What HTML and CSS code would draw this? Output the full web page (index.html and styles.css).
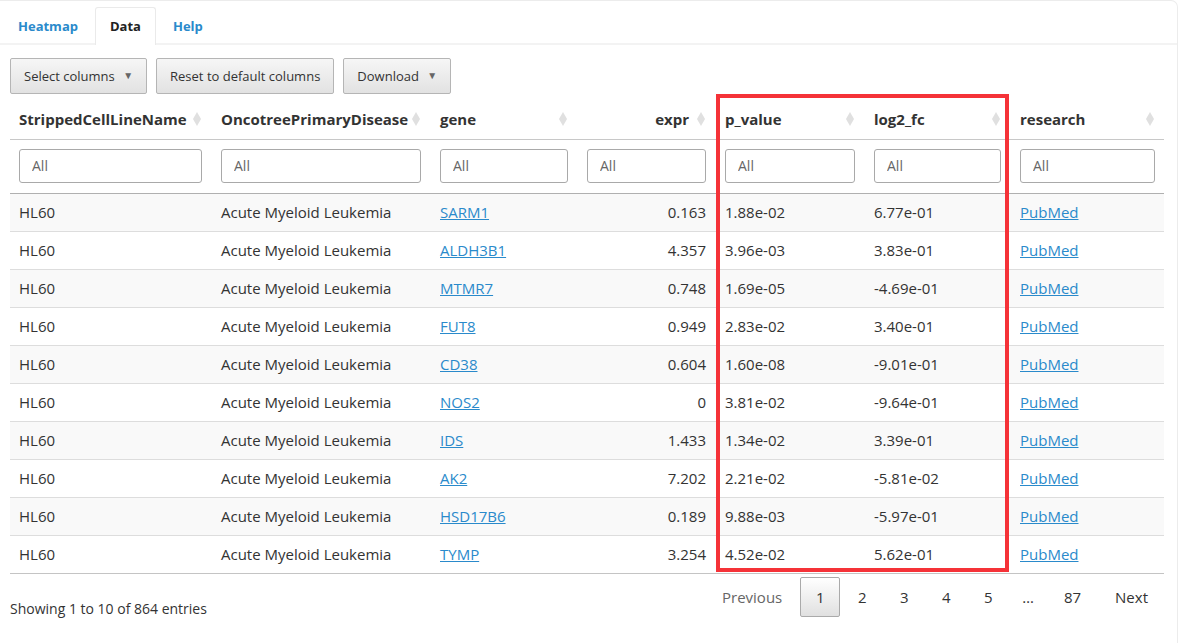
FILE: index.html
```html
<!DOCTYPE html>
<html>
<head>
<meta charset="utf-8">
<link rel="stylesheet" href="styles.css">
</head>
<body>
<div class="card">
  <ul class="tabs">
    <li class="tab"><a>Heatmap</a></li>
    <li class="tab active"><a>Data</a></li>
    <li class="tab"><a>Help</a></li>
  </ul>
  <div class="content">
    <div class="toolbar">
      <button class="btn">Select columns <span class="caret">▼</span></button>
      <button class="btn">Reset to default columns</button>
      <button class="btn">Download <span class="caret">▼</span></button>
    </div>
    <div class="table-wrap">
      <table class="grid">
        <colgroup>
          <col style="width:201px"><col style="width:219px"><col style="width:147px"><col style="width:138px"><col style="width:149px"><col style="width:146px"><col style="width:154px">
        </colgroup>
        <thead>
          <tr class="head">
            <th><div class="hcell"><span>StrippedCellLineName</span><svg class="sort" viewBox="0 0 8 16"><path d="M4 1 L8 8 L4 15 L0 8 Z"/></svg></div></th>
            <th><div class="hcell"><span>OncotreePrimaryDisease</span><svg class="sort" viewBox="0 0 8 16"><path d="M4 1 L8 8 L4 15 L0 8 Z"/></svg></div></th>
            <th><div class="hcell"><span>gene</span><svg class="sort" viewBox="0 0 8 16"><path d="M4 1 L8 8 L4 15 L0 8 Z"/></svg></div></th>
            <th><div class="hcell right"><span>expr</span><svg class="sort" viewBox="0 0 8 16"><path d="M4 1 L8 8 L4 15 L0 8 Z"/></svg></div></th>
            <th><div class="hcell"><span>p_value</span><svg class="sort" viewBox="0 0 8 16"><path d="M4 1 L8 8 L4 15 L0 8 Z"/></svg></div></th>
            <th><div class="hcell"><span>log2_fc</span><svg class="sort" viewBox="0 0 8 16"><path d="M4 1 L8 8 L4 15 L0 8 Z"/></svg></div></th>
            <th><div class="hcell"><span>research</span><svg class="sort" viewBox="0 0 8 16"><path d="M4 1 L8 8 L4 15 L0 8 Z"/></svg></div></th>
          </tr>
          <tr class="filters">
            <td><input class="filter" placeholder="All"></td>
            <td><input class="filter" placeholder="All"></td>
            <td><input class="filter" placeholder="All"></td>
            <td><input class="filter" placeholder="All"></td>
            <td><input class="filter" placeholder="All"></td>
            <td><input class="filter" placeholder="All"></td>
            <td><input class="filter" placeholder="All"></td>
          </tr>
        </thead>
        <tbody>
          <tr><td>HL60</td><td>Acute Myeloid Leukemia</td><td><a class="link">SARM1</a></td><td class="num">0.163</td><td>1.88e-02</td><td>6.77e-01</td><td><a class="link">PubMed</a></td></tr>
          <tr><td>HL60</td><td>Acute Myeloid Leukemia</td><td><a class="link">ALDH3B1</a></td><td class="num">4.357</td><td>3.96e-03</td><td>3.83e-01</td><td><a class="link">PubMed</a></td></tr>
          <tr><td>HL60</td><td>Acute Myeloid Leukemia</td><td><a class="link">MTMR7</a></td><td class="num">0.748</td><td>1.69e-05</td><td>-4.69e-01</td><td><a class="link">PubMed</a></td></tr>
          <tr><td>HL60</td><td>Acute Myeloid Leukemia</td><td><a class="link">FUT8</a></td><td class="num">0.949</td><td>2.83e-02</td><td>3.40e-01</td><td><a class="link">PubMed</a></td></tr>
          <tr><td>HL60</td><td>Acute Myeloid Leukemia</td><td><a class="link">CD38</a></td><td class="num">0.604</td><td>1.60e-08</td><td>-9.01e-01</td><td><a class="link">PubMed</a></td></tr>
          <tr><td>HL60</td><td>Acute Myeloid Leukemia</td><td><a class="link">NOS2</a></td><td class="num">0</td><td>3.81e-02</td><td>-9.64e-01</td><td><a class="link">PubMed</a></td></tr>
          <tr><td>HL60</td><td>Acute Myeloid Leukemia</td><td><a class="link">IDS</a></td><td class="num">1.433</td><td>1.34e-02</td><td>3.39e-01</td><td><a class="link">PubMed</a></td></tr>
          <tr><td>HL60</td><td>Acute Myeloid Leukemia</td><td><a class="link">AK2</a></td><td class="num">7.202</td><td>2.21e-02</td><td>-5.81e-02</td><td><a class="link">PubMed</a></td></tr>
          <tr><td>HL60</td><td>Acute Myeloid Leukemia</td><td><a class="link">HSD17B6</a></td><td class="num">0.189</td><td>9.88e-03</td><td>-5.97e-01</td><td><a class="link">PubMed</a></td></tr>
          <tr><td>HL60</td><td>Acute Myeloid Leukemia</td><td><a class="link">TYMP</a></td><td class="num">3.254</td><td>4.52e-02</td><td>5.62e-01</td><td><a class="link">PubMed</a></td></tr>
        </tbody>
      </table>
      <div class="highlight"></div>
    </div>
    <div class="footer">
      <div class="info">Showing 1 to 10 of 864 entries</div>
      <div class="pager">
        <span class="pbtn disabled">Previous</span>
        <span class="pbtn digit current">1</span>
        <span class="pbtn digit">2</span>
        <span class="pbtn digit">3</span>
        <span class="pbtn digit">4</span>
        <span class="pbtn digit">5</span>
        <span class="ellipsis">…</span>
        <span class="pbtn">87</span>
        <span class="pbtn">Next</span>
      </div>
    </div>
  </div>
</div>
</body>
</html>
```
FILE: styles.css
```css
html, body {
  margin: 0;
  padding: 0;
  background: #ffffff;
}
body {
  font-family: "Open Sans", "Liberation Sans", sans-serif;
  font-size: 15px;
  color: #333333;
}
.card {
  width: 1178px;
  height: 660px;
  border: 1px solid #ececec;
  border-left: none;
  border-top-right-radius: 7px;
  box-sizing: border-box;
}
.tabs {
  list-style: none;
  margin: 0;
  padding: 6px 0 0 3px;
  display: flex;
  border-bottom: 2px solid #f3f3f3;
  height: 36px;
}
.tab {
  margin-right: 2px;
}
.tab a {
  display: block;
  height: 36px;
  line-height: 36px;
  padding: 0 14px;
  font-size: 13px;
  font-weight: 700;
  color: #2a8acb;
  box-sizing: border-box;
  border: 1px solid transparent;
  border-bottom: none;
}
.tab.active a {
  color: #222222;
  background: #ffffff;
  border-color: #eaeaea;
  border-radius: 3px 3px 0 0;
  height: 38px;
}
.content {
  padding: 13px 0 0 10px;
}
.toolbar {
  display: flex;
  gap: 9px;
  height: 36px;
}
.btn {
  font-family: inherit;
  font-size: 13px;
  color: #333333;
  height: 36px;
  padding: 0 13px;
  border: 1px solid #b5b5b5;
  border-radius: 2px;
  background: linear-gradient(#f6f6f6, #e2e2e2);
}
.caret {
  font-size: 10px;
  color: #666;
  margin-left: 5px;
  position: relative;
  top: -2px;
}
.table-wrap {
  position: relative;
  margin-top: 6px;
  width: 1154px;
}
.grid {
  width: 1154px;
  table-layout: fixed;
  border-collapse: collapse;
  border-spacing: 0;
}
.head th {
  height: 39px;
  padding: 0 10px 0 9px;
  border-bottom: 1px solid #c8c8c8;
  text-align: left;
  font-weight: 700;
  font-size: 15px;
  color: #333;
  box-sizing: border-box;
}
.head th + th {
  padding-left: 10px;
}
.hcell {
  display: flex;
  align-items: center;
  justify-content: space-between;
  white-space: nowrap;
}
.hcell.right {
  justify-content: flex-end;
  gap: 8px;
}
.sort {
  width: 8px;
  height: 16px;
  fill: #e0e0e0;
  flex: none;
}
.filters td {
  padding: 9px 9px 10px 9px;
  height: 54px;
  box-sizing: border-box;
  border-bottom: 1px solid #b0b0b0;
}
.filters td + td {
  padding-left: 10px;
}
.filter {
  display: block;
  width: 100%;
  height: 34px;
  box-sizing: border-box;
  border: 1px solid #a9a9a9;
  border-radius: 3px;
  padding: 0 12px;
  font-family: inherit;
  font-size: 14px;
  color: #555;
}
.filter::placeholder {
  color: #666;
}
tbody td {
  height: 38px;
  padding: 0 9px 0 10px;
  box-sizing: border-box;
  border-bottom: 1px solid #dddddd;
  white-space: nowrap;
}
tbody td:first-child {
  padding-left: 9px;
}
tbody tr:nth-child(odd) td {
  background: #f9f9f9;
}
tbody tr:last-child td {
  border-bottom-color: #c4c4c4;
}
.num {
  text-align: right;
}
.link {
  color: #2a8acb;
  text-decoration: underline;
}
.highlight {
  position: absolute;
  left: 706px;
  top: -6px;
  width: 293px;
  height: 478px;
  border: 4px solid #f53238;
  box-sizing: border-box;
  pointer-events: none;
}
.footer {
  display: flex;
  justify-content: space-between;
  width: 1154px;
  margin-top: 3px;
}
.info {
  padding-top: 22px;
  font-size: 14px;
}
.pager {
  display: flex;
  align-items: center;
}
.pbtn {
  box-sizing: border-box;
  height: 40px;
  line-height: 38px;
  padding: 0 15px;
  margin-left: 2px;
  border: 1px solid transparent;
  border-radius: 2px;
  color: #333;
}
.pbtn.digit {
  width: 40px;
  padding: 0;
  text-align: center;
}
.pbtn.disabled {
  color: #666;
}
.pbtn.current {
  border-color: #aaaaaa;
  background: linear-gradient(#ffffff, #e0e0e0);
}
.ellipsis {
  padding: 0 12px;
  margin-left: 2px;
  line-height: 40px;
}
```
